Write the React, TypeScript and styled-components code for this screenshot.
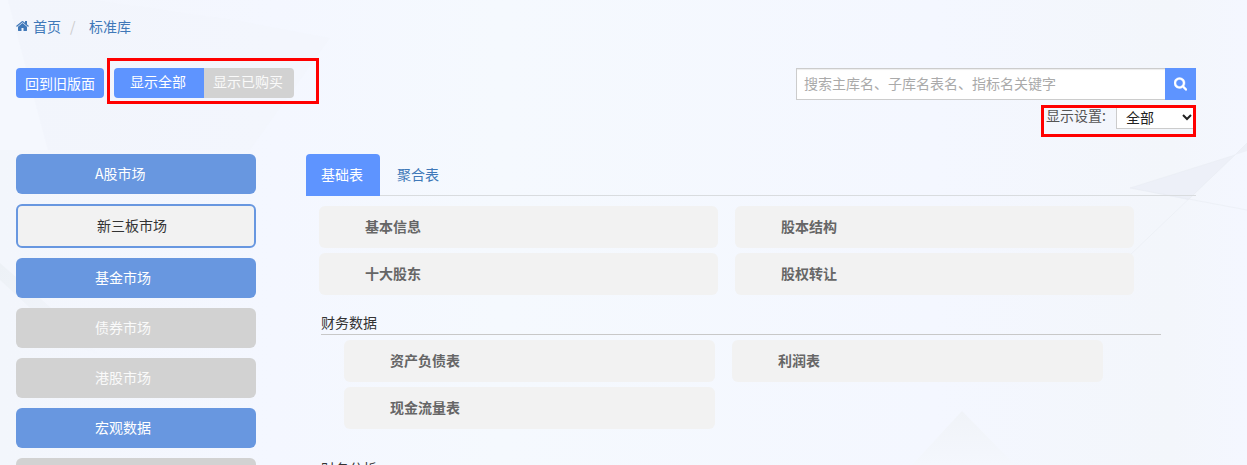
import React, { useState } from "react";
import styled, { createGlobalStyle, css } from "styled-components";

const GlobalStyle = createGlobalStyle`
  * { box-sizing: border-box; }
  body {
    margin: 0;
    background: #f5f8fe;
    color: #333;
    font: 14px/20px "Noto Sans CJK SC", "Liberation Sans", sans-serif;
  }
  button, input, select { font: inherit; }
  button { cursor: pointer; }
`;

const Page = styled.div`
  position: relative;
  height: 100vh;
  overflow: hidden;
  padding: 16px 51px 0 16px;
`;

const Backdrop = styled.svg`
  position: absolute;
  inset: 0;
  width: 100%;
  height: 100%;
  z-index: -1;
`;

const Breadcrumb = styled.nav`
  display: flex;
  align-items: center;
  height: 20px;
  a {
    display: flex;
    align-items: center;
    gap: 4px;
    color: #4078b8;
    text-decoration: none;
  }
  span {
    width: 28px;
    padding-left: 9px;
    color: #ccc;
  }
`;

const Toolbar = styled.header`
  display: flex;
  justify-content: space-between;
  align-items: flex-start;
  margin-top: 32px;
`;

const ToolbarActions = styled.div`
  display: flex;
  gap: 10px;
`;

const ActionButton = styled.button`
  width: 88px;
  height: 30px;
  padding: 0;
  border: 0;
  border-radius: 4px;
  background: #5e94ff;
  color: #fff;
`;

const ButtonGroup = styled.div`
  position: relative;
  display: flex;
`;

const GroupButton = styled.button<{ $on: boolean }>`
  width: 90px;
  height: 30px;
  padding: 0 2px 4px 0;
  border: 0;
  background: ${(p) => (p.$on ? "#5e94ff" : "#d2d2d2")};
  color: ${(p) => (p.$on ? "#fff" : "#fafafa")};
  &:first-child { border-radius: 4px 0 0 4px; }
  &:last-of-type { border-radius: 0 4px 4px 0; }
`;

const Highlight = styled.div<{ $inset: string }>`
  position: absolute;
  inset: ${(p) => p.$inset};
  border: 3px solid #f00;
  pointer-events: none;
`;

const SearchArea = styled.div`
  display: flex;
  flex-direction: column;
  align-items: flex-end;
  gap: 5px;
  width: 400px;
`;

const SearchForm = styled.form`
  display: flex;
  width: 100%;
  height: 32px;
`;

const SearchInput = styled.input`
  flex: 1;
  min-width: 0;
  padding: 0 7px 2px;
  border: 1px solid #ccc;
  border-right: 0;
  background: #fff;
  box-shadow: inset 0 1px 1px rgba(0, 0, 0, 0.075);
  &::placeholder { color: #aaa; }
`;

const SearchButton = styled.button`
  display: flex;
  align-items: center;
  justify-content: center;
  width: 31px;
  padding: 0;
  border: 0;
  background: #5e94ff;
  color: #fff;
`;

const DisplaySetting = styled.div`
  position: relative;
  display: flex;
  align-items: flex-start;
  gap: 10px;
  padding-left: 5px;
  height: 32px;
  label { color: #555; }
`;

const DisplaySelect = styled.select`
  width: 80px;
  height: 24px;
  padding: 0 0 0 5px;
  border: 1px solid #ccc;
  border-radius: 0;
  background: #fff;
  color: #222;
`;

const Body = styled.div`
  display: flex;
  align-items: flex-start;
  gap: 50px;
  margin-top: 17px;
`;

const Sidebar = styled.nav`
  display: flex;
  flex-direction: column;
  flex: none;
  gap: 10px;
  width: 240px;
`;

type MarketState = "open" | "current" | "locked";

const MarketButton = styled.button<{ $state: MarketState }>`
  height: 40px;
  padding: 0 0 2px 79px;
  border: 0;
  border-radius: 6px;
  background: ${(p) => (p.$state === "open" ? "#6897e0" : "#d2d2d2")};
  color: ${(p) => (p.$state === "open" ? "#fff" : "#fafafa")};
  text-align: left;
  ${(p) =>
    p.$state === "current" &&
    css`
      height: 44px;
      border: 2px solid #6897e0;
      background: #f2f2f2;
      color: #333;
    `}
`;

const Main = styled.main`
  flex: 1;
  min-width: 0;
`;

const TabList = styled.div`
  display: flex;
  gap: 2px;
  height: 42px;
  box-shadow: inset 0 -1px #d9dcdf;
`;

const Tab = styled.button<{ $on: boolean }>`
  width: 74px;
  padding: 0 2px 2px 0;
  border: 0;
  border-radius: 4px 4px 0 0;
  background: ${(p) => (p.$on ? "#5e94ff" : "transparent")};
  color: ${(p) => (p.$on ? "#fff" : "#4078b8")};
`;

const CardGrid = styled.div<{ $nested?: boolean }>`
  display: grid;
  grid-template-columns: 1fr 1fr;
  gap: 5px 17px;
  padding: ${(p) => (p.$nested ? "5px 58px 12px 23px" : "10px 62px 0 13px")};
`;

const Card = styled.button`
  height: 42px;
  padding: 0 0 2px 46px;
  border: 0;
  border-radius: 6px;
  background: #f2f2f2;
  color: #666;
  font-weight: 700;
  text-align: left;
`;

const Section = styled.section`
  padding: 17px 35px 0 15px;
`;

const SectionTitle = styled.h2`
  height: 23px;
  margin: 0;
  border-bottom: 1px solid #c8c8c8;
  font-size: 14px;
  font-weight: 400;
  line-height: 20px;
`;

const HomeIcon = () => (
  <svg width="13" height="14" viewBox="0 0 1664 1792" fill="currentColor" aria-hidden="true">
    <path d="M1408 992v480q0 26-19 45t-45 19h-384v-384h-256v384h-384q-26 0-45-19t-19-45v-480q0-1 .5-3t.5-3l575-474 575 474q1 2 1 6zm223-69l-62 74q-8 9-21 11h-3q-13 0-21-7l-692-577-692 577q-12 8-24 7-13-2-21-11l-62-74q-8-10-7-23.5t11-21.5l719-599q32-26 76-26t76 26l244 204v-195q0-14 9-23t23-9h192q14 0 23 9t9 23v408l219 182q10 8 11 21.5t-7 23.5z" />
  </svg>
);

const SearchIcon = () => (
  <svg width="13" height="14" viewBox="0 64 1664 1792" fill="currentColor" stroke="currentColor" strokeWidth="50" aria-hidden="true">
    <path d="M1152 832q0-185-131.5-316.5t-316.5-131.5-316.5 131.5-131.5 316.5 131.5 316.5 316.5 131.5 316.5-131.5 131.5-316.5zm512 832q0 52-38 90t-90 38q-54 0-90-38l-343-342q-179 124-399 124-143 0-273.5-55.5t-225-150-150-225-55.5-273.5 55.5-273.5 150-225 225-150 273.5-55.5 273.5 55.5 225 150 150 225 55.5 273.5q0 220-124 399l343 343q37 37 37 90z" />
  </svg>
);

const PageBackdrop = () => (
  <Backdrop viewBox="0 0 1247 465" preserveAspectRatio="none" aria-hidden="true">
    <defs>
      <linearGradient id="wash">
        <stop offset="0" stopColor="#f3f6fc" />
        <stop offset="0.22" stopColor="#f4f7ff" />
        <stop offset="0.4" stopColor="#f5f9fe" />
        <stop offset="0.75" stopColor="#f4f7ff" />
        <stop offset="0.94" stopColor="#f3f6fb" />
        <stop offset="1" stopColor="#f4f7ff" />
      </linearGradient>
      <linearGradient id="peak" x1="0" y1="0" x2="0" y2="1">
        <stop offset="0" stopColor="#f0f3f8" />
        <stop offset="1" stopColor="#f4f7fd" />
      </linearGradient>
      <linearGradient id="fold" x1="0" y1="0" x2="1" y2="1">
        <stop offset="0" stopColor="#edf1f6" />
        <stop offset="1" stopColor="#f3f6fd" />
      </linearGradient>
    </defs>
    <rect width="1247" height="465" fill="url(#wash)" />
    <path d="M8 0L48 150H0V0Z" fill="#f5f8fe" />
    <path d="M8 0H95L240 21L330 38L250 150H48Z" fill="#f2f5fb" opacity="0.6" />
    <path d="M0 263L50 307L100 355L70 345L0 280Z" fill="url(#fold)" />
    <path d="M1130 188L1235 155L1188 200Z" fill="#edf0f8" />
    <path d="M1235 155L1247 143V151Z" fill="#edf0f8" />
    <path d="M1130 188L1235 155L1247 143M1235 155L1130 255M1130 188L1247 210" fill="none" stroke="#e7ebf1" opacity="0.5" />
    <path d="M962 411L912 465H1015Z" fill="url(#peak)" />
  </Backdrop>
);

const markets: { name: string; state: MarketState }[] = [
  { name: "A股市场", state: "open" },
  { name: "新三板市场", state: "current" },
  { name: "基金市场", state: "open" },
  { name: "债券市场", state: "locked" },
  { name: "港股市场", state: "locked" },
  { name: "宏观数据", state: "open" },
  { name: "", state: "locked" },
];

const tabs = ["基础表", "聚合表"];
const baseTables = ["基本信息", "股本结构", "十大股东", "股权转让"];
const sections = [
  { title: "财务数据", tables: ["资产负债表", "利润表", "现金流量表"] },
  { title: "财务分析", tables: [] },
];

export default function App() {
  const [scope, setScope] = useState("显示全部");
  const [tab, setTab] = useState(tabs[0]);

  return (
    <>
      <GlobalStyle />
      <Page>
        <PageBackdrop />
        <Breadcrumb>
          <a href="#home"><HomeIcon />首页</a>
          <span>/</span>
          <a href="#library">标准库</a>
        </Breadcrumb>
        <Toolbar>
          <ToolbarActions>
            <ActionButton type="button">回到旧版面</ActionButton>
            <ButtonGroup>
              {["显示全部", "显示已购买"].map((name) => (
                <GroupButton key={name} type="button" $on={scope === name} onClick={() => setScope(name)}>
                  {name}
                </GroupButton>
              ))}
              <Highlight $inset="-10px -25px -6px -7px" />
            </ButtonGroup>
          </ToolbarActions>
          <SearchArea>
            <SearchForm onSubmit={(e) => e.preventDefault()}>
              <SearchInput aria-label="搜索" placeholder="搜索主库名、子库名表名、指标名关键字" />
              <SearchButton type="submit" aria-label="搜索"><SearchIcon /></SearchButton>
            </SearchForm>
            <DisplaySetting>
              <label htmlFor="display">显示设置:</label>
              <DisplaySelect id="display" defaultValue="全部">
                <option>全部</option>
              </DisplaySelect>
              <Highlight $inset="0" />
            </DisplaySetting>
          </SearchArea>
        </Toolbar>
        <Body>
          <Sidebar>
            {markets.map((m, i) => (
              <MarketButton key={i} type="button" $state={m.state}>{m.name}</MarketButton>
            ))}
          </Sidebar>
          <Main>
            <TabList role="tablist">
              {tabs.map((name) => (
                <Tab key={name} type="button" role="tab" aria-selected={tab === name} $on={tab === name} onClick={() => setTab(name)}>
                  {name}
                </Tab>
              ))}
            </TabList>
            <CardGrid>
              {baseTables.map((name) => <Card key={name} type="button">{name}</Card>)}
            </CardGrid>
            {sections.map((s) => (
              <Section key={s.title}>
                <SectionTitle>{s.title}</SectionTitle>
                <CardGrid $nested>
                  {s.tables.map((name) => <Card key={name} type="button">{name}</Card>)}
                </CardGrid>
              </Section>
            ))}
          </Main>
        </Body>
      </Page>
    </>
  );
}
